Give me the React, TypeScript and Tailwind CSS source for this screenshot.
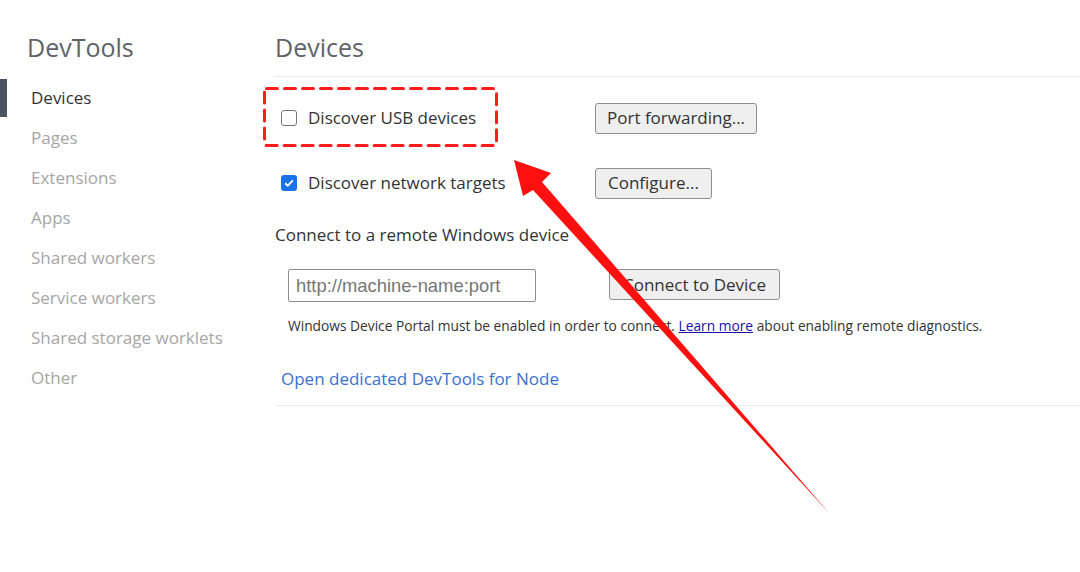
import React from "react";

const font = { fontFamily: '"Open Sans", "Noto Sans", sans-serif' };

function Sidebar() {
  const items = [
    "Devices",
    "Pages",
    "Extensions",
    "Apps",
    "Shared workers",
    "Service workers",
    "Shared storage worklets",
    "Other",
  ];
  return (
    <div className="w-[255px] shrink-0 pt-[30px]">
      <div className="pl-[27px] text-[25px] leading-[34px] text-[#5f6368]">DevTools</div>
      <div className="mt-[14px] flex flex-col">
        {items.map((it, i) => (
          <div key={it} className="relative flex h-[40px] items-center pl-[31px]">
            {i === 0 && <div className="absolute left-0 top-[1px] h-[38px] w-[7px] bg-[#4a5561]" />}
            <span className={"text-[17px] " + (i === 0 ? "text-[#333]" : "text-[#a6a6a6]")}>{it}</span>
          </div>
        ))}
      </div>
    </div>
  );
}

function Btn({ children, className = "" }: { children: React.ReactNode; className?: string }) {
  return (
    <button
      className={
        "h-[31px] rounded-[3px] border border-[#8f8f8f] bg-[#efefef] px-[10px] text-[17px] leading-[24px] text-[#333] " +
        className
      }
    >
      {children}
    </button>
  );
}

export default function App() {
  return (
    <div className="relative h-[572px] w-[1080px] overflow-hidden bg-white" style={font}>
      <div className="flex">
        <Sidebar />
        <div className="flex-1 pl-[20px] pt-[30px]">
          <div className="text-[25px] leading-[34px] text-[#5f6368]">Devices</div>
          <div className="mt-[12px] h-px bg-[#ececec]" />
          <div className="mt-[25px] flex h-[32px] items-center">
            <div className="flex w-[320px] items-center pl-[6px]">
              <span className="h-[16px] w-[16px] rounded-[3px] border border-[#767676] bg-white" />
              <span className="ml-[11px] text-[17px] text-[#333]">Discover USB devices</span>
            </div>
            <Btn className="px-[11px]">Port forwarding...</Btn>
          </div>
          <div className="mt-[33px] flex h-[32px] items-center">
            <div className="flex w-[320px] items-center pl-[6px]">
              <span className="flex h-[16px] w-[16px] items-center justify-center rounded-[3px] bg-[#1a73e8]">
                <svg width="12" height="12" viewBox="0 0 12 12">
                  <path d="M2.2 6.2 L4.8 8.7 L9.8 3.3" fill="none" stroke="white" strokeWidth="1.9" />
                </svg>
              </span>
              <span className="ml-[11px] text-[17px] text-[#333]">Discover network targets</span>
            </div>
            <Btn className="px-[12px]">Configure...</Btn>
          </div>
          <div className="mt-[24px] text-[17px] leading-[24px] text-[#333]">Connect to a remote Windows device</div>
          <div className="mt-[22px] flex items-start pl-[13px]">
            <input
              className="h-[33px] w-[248px] rounded-[2px] border border-[#8f8f8f] px-[7px] text-[18.4px] text-[#333] placeholder:text-[#767676] outline-none"
              style={{ fontFamily: '"Liberation Sans", Arial, sans-serif' }}
              placeholder="http://machine-name:port"
            />
            <Btn className="ml-[73px] px-[13px]">Connect to Device</Btn>
          </div>
          <div className="mt-[14px] pl-[13px] text-[13.75px] leading-[20px] text-[#333]">
            Windows Device Portal must be enabled in order to connect.{" "}
            <span className="text-[#1a0dab] underline">Learn more</span> about enabling remote diagnostics.
          </div>
          <div className="mt-[31px] pl-[6px] text-[17px] leading-[24px] text-[#3b6fd4]">Open dedicated DevTools for Node</div>
          <div className="mt-[14px] h-px bg-[#ececec]" />
        </div>
      </div>

      <svg className="pointer-events-none absolute inset-0" width="1080" height="572" viewBox="0 0 1080 572">
        <rect
          x="264.5"
          y="88.5"
          width="232"
          height="57"
          rx="2"
          fill="none"
          stroke="#ff1c1c"
          strokeWidth="3"
          strokeDasharray="11 7"
          strokeLinecap="round"
        />
        <polygon points="514,160 551,173 542,182 830,514 533,190 523,196" fill="#ff1010" />
      </svg>
    </div>
  );
}
